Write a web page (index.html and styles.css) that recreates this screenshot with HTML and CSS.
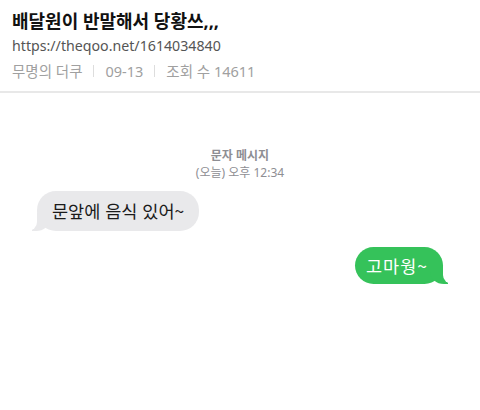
FILE: index.html
```html
<!DOCTYPE html>
<html lang="ko">
<head>
  <meta charset="UTF-8" />
  <meta name="viewport" content="width=device-width, initial-scale=1.0" />
  <title>배달원이 반말해서 당황쓰,,,</title>
  <link rel="stylesheet" href="styles.css">
</head>
<body>
  <div class="post-head">
    <h1 class="title">배달원이 반말해서 당황쓰,,,</h1>
    <div class="url">https://theqoo.net/1614034840</div>
    <div class="meta">
      <span>무명의 더쿠</span>
      <span class="sep"></span>
      <span>09-13</span>
      <span class="sep"></span>
      <span>조회 수 14611</span>
    </div>
  </div>

  <div class="chat">
    <div class="chat-info">
      <div class="kind">문자 메시지</div>
      <div class="time">(오늘) 오후 12:34</div>
    </div>
    <div class="row in">
      <div class="bubble gray">문앞에 음식 있어~</div>
    </div>
    <div class="row out">
      <div class="bubble green">고마웡~</div>
    </div>
  </div>
</body>
</html>
```

FILE: styles.css
```css
body {
  margin: 0;
  background: #fff;
  font-family: "Noto Sans", "Noto Sans CJK KR", sans-serif;
  color: #111;
}
.post-head {
  padding: 9px 12px 8px;
  border-bottom: 2px solid #e8e8e8;
}
.title {
  margin: 0;
  font-size: 18px;
  line-height: 24px;
  font-weight: 700;
  color: #111;
}
.url {
  font-size: 14.2px;
  line-height: 26px;
  color: #555;
}
.meta {
  display: flex;
  align-items: center;
  gap: 11px;
  font-size: 14.5px;
  line-height: 24px;
  color: #a0a0a0;
}
.sep {
  width: 1px;
  height: 12px;
  background: #ddd;
}
.chat {
  padding: 54px 37px 0;
}
.chat-info {
  text-align: center;
  font-size: 12px;
  line-height: 17px;
  color: #8e8e93;
}
.chat-info .kind {
  font-weight: 700;
}
.row {
  display: flex;
}
.row.in {
  margin-top: 10px;
}
.row.out {
  margin-top: 16px;
  justify-content: flex-end;
}
.bubble {
  position: relative;
  border-radius: 19px;
  font-size: 17.5px;
  font-family: "Noto Sans CJK KR", sans-serif;
}
.bubble.gray {
  background: #e9e9eb;
  color: #1a1a1a;
  padding: 0 15px;
  line-height: 40px;
}
.bubble.green {
  background: #35c25a;
  color: #fff;
  padding: 0 15px 0 11px;
  line-height: 37px;
  letter-spacing: 1px;
}
.bubble::before,
.bubble::after {
  content: "";
  position: absolute;
  bottom: 0;
  height: 18px;
}
.bubble.gray::before {
  left: -5px;
  width: 18px;
  background: #e9e9eb;
  border-bottom-right-radius: 14px 12px;
}
.bubble.gray::after {
  left: -12px;
  width: 12px;
  background: #fff;
  border-bottom-right-radius: 9px;
}
.bubble.green::before {
  right: -5px;
  width: 18px;
  background: #35c25a;
  border-bottom-left-radius: 14px 12px;
}
.bubble.green::after {
  right: -12px;
  width: 12px;
  background: #fff;
  border-bottom-left-radius: 9px;
}
```
